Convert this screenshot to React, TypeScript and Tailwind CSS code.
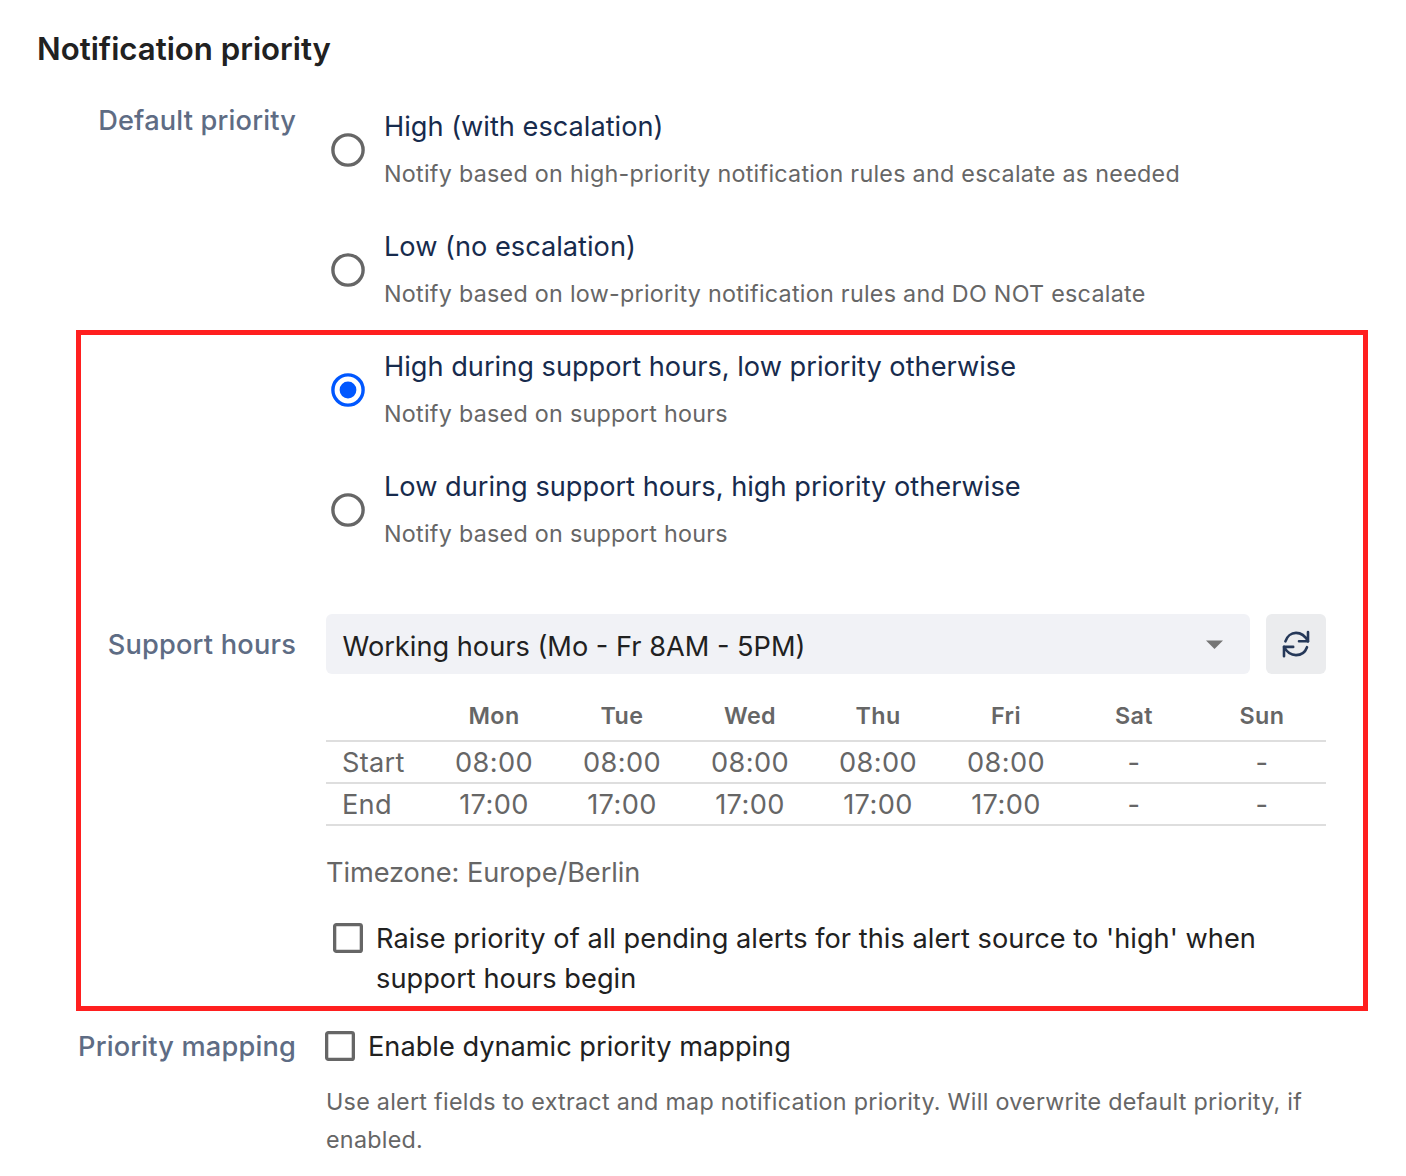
import React from 'react';

const options = [
  { title: 'High (with escalation)', note: 'Notify based on high-priority notification rules and escalate as needed' },
  { title: 'Low (no escalation)', note: 'Notify based on low-priority notification rules and DO NOT escalate' },
  { title: 'High during support hours, low priority otherwise', note: 'Notify based on support hours', on: true },
  { title: 'Low during support hours, high priority otherwise', note: 'Notify based on support hours' },
];
const days = ['Mon', 'Tue', 'Wed', 'Thu', 'Fri', 'Sat', 'Sun'];
const rows = [
  { label: 'Start', time: '08:00' },
  { label: 'End', time: '17:00' },
];

function Radio({ on }: { on?: boolean }) {
  return (
    <svg className={`mt-[26px] shrink-0 ${on ? 'text-[#0057ff]' : 'text-[#666666]'}`} width="34" height="34" viewBox="0 0 34 34">
      <circle cx="17" cy="17" r="15.1" fill="none" stroke="currentColor" strokeWidth="3.4" />
      {on && <circle cx="17" cy="17" r="8.4" fill="currentColor" />}
    </svg>
  );
}

function Box() {
  return (
    <svg className="mt-[4px] shrink-0" width="30" height="30" viewBox="0 0 30 30">
      <rect x="1.65" y="1.65" width="26.7" height="26.7" rx="1.7" fill="none" stroke="#666666" strokeWidth="3.3" />
    </svg>
  );
}

export default function App() {
  return (
    <div className="relative h-[1176px] w-[1406px] overflow-hidden bg-white font-[Inter,sans-serif] text-[27.2px] leading-[40px] text-[#212121]">
      <h2 className="ml-[37px] pt-[29px] text-[31.2px] font-semibold leading-[40px]"><span>Notification priority</span></h2>
      <div className="mt-[31px] flex">
        <div className="w-[296px] shrink-0 pt-px text-right font-medium tracking-[0.17px] text-[#5e6c84]"><span>Default priority</span></div>
        <div className="ml-[35px]">
          {options.map((o) => (
            <div key={o.title} className="flex h-[120px] gap-[19px] pt-[7px]">
              <Radio on={o.on} />
              <div>
                <div className="whitespace-nowrap text-[#172b4d]"><span>{o.title}</span></div>
                <div className="mt-[7px] whitespace-nowrap text-[23.3px] tracking-[0.27px] text-[#666666]"><span>{o.note}</span></div>
              </div>
            </div>
          ))}
        </div>
      </div>
      <div className="mt-[34px] flex">
        <div className="w-[296px] shrink-0 pt-[11px] text-right font-medium tracking-[0.2px] text-[#5e6c84]"><span>Support hours</span></div>
        <div className="ml-[30px] w-[1000px]">
          <div className="flex h-[60px] gap-4">
            <div className="flex w-[924px] items-center justify-between rounded-[6px] bg-[#f1f2f6] pl-[16.5px] pr-[27.5px] pt-1.5">
              <span>Working hours (Mo - Fr 8AM - 5PM)</span>
              <svg className="mb-1.5" width="17" height="9" viewBox="0 0 17 9"><path d="M0 0.5h17L8.5 9z" fill="#757575" /></svg>
            </div>
            <div className="flex w-[60px] items-center justify-center rounded-[6px] bg-[#ebecee]">
              <svg width="28" height="28" viewBox="0 0 28 28" fill="none" stroke="#253858" strokeWidth="2.6" strokeLinecap="round" strokeLinejoin="round">
                <path d="M26 2v9.3h-9M2 26.3v-9.4h9.2" />
                <path d="M3.4 11.3C5 6.2 9.3 2.9 14 2.9c5.5 0 9.5 3.6 12 8.4M25 17.2c-1.800 4.900-6 7.900-11 7.900-5.500 0-9.500-3.600-12-8.200" />
              </svg>
            </div>
          </div>
          <div className="mt-[22px] grid grid-cols-[104px_repeat(7,128px)] text-center text-[#666666]">
            <div className="h-[46px] border-b-2 border-[#dedede]" />
            {days.map((d) => <div key={d} className="h-[46px] border-b-2 border-[#dedede] text-[23.3px] font-semibold tracking-[0.4px]"><span>{d}</span></div>)}
            {rows.map((r) => (
              <React.Fragment key={r.label}>
                <div className="h-[42px] border-b-2 border-[#dedede] pl-4 pt-px text-left leading-[40px] tracking-[0.25px]"><span>{r.label}</span></div>
                {days.map((d, i) => <div key={d} className="h-[42px] border-b-2 border-[#dedede] pt-px tracking-[0.4px]"><span>{i < 5 ? r.time : '-'}</span></div>)}
              </React.Fragment>
            ))}
          </div>
          <div className="mt-[27px] tracking-[-0.08px] text-[#666666]"><span>Timezone: Europe/Berlin</span></div>
          <div className="ml-[7px] mt-[26px] flex gap-[13px]">
            <Box />
            <div className="whitespace-nowrap tracking-[0.03px]"><span>Raise priority of all pending alerts for this alert source to 'high' when</span><br /><span>support hours begin</span></div>
          </div>
        </div>
      </div>
      <div className="mt-[28px] flex">
        <div className="w-[296px] shrink-0 text-right font-medium tracking-[0.17px] text-[#5e6c84]"><span>Priority mapping</span></div>
        <div className="ml-[29px]">
          <div className="flex gap-[13px]"><Box /><span>Enable dynamic priority mapping</span></div>
          <div className="ml-px mt-[16px] whitespace-nowrap text-[23.3px] leading-[38px] tracking-[0.27px] text-[#666666]"><span>Use alert fields to extract and map notification priority. Will overwrite default priority, if</span><br /><span>enabled.</span></div>
        </div>
      </div>
      <div className="pointer-events-none absolute left-[76px] top-[330px] h-[681px] w-[1292px] border-[5px] border-[#ff1f1f]" />
    </div>
  );
}
